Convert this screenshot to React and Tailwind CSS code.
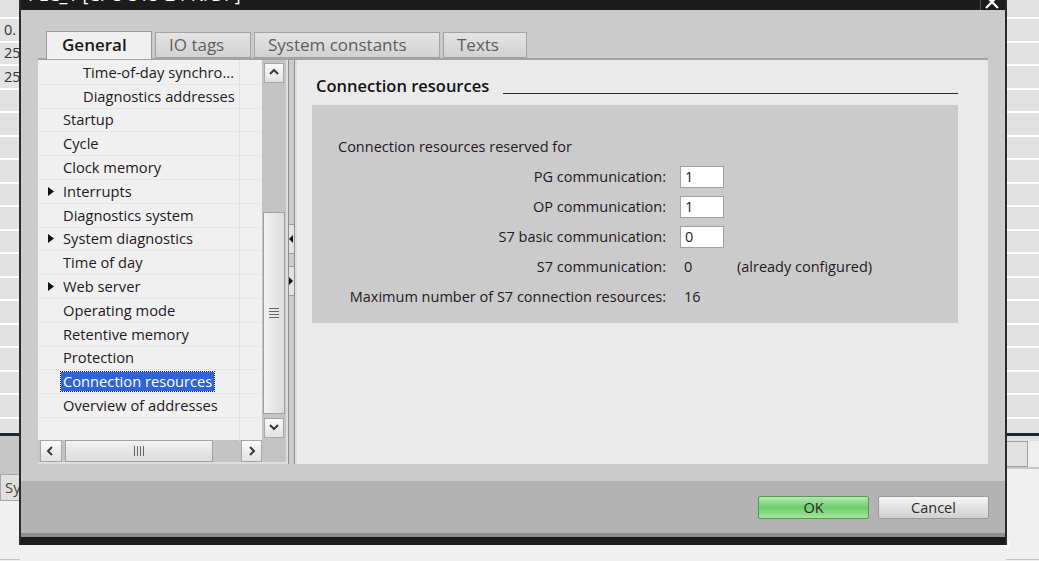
import React from 'react';

const treeItems = [
  { label: 'Time-of-day synchro...', level: 2 },
  { label: 'Diagnostics addresses', level: 2 },
  { label: 'Startup', level: 1 },
  { label: 'Cycle', level: 1 },
  { label: 'Clock memory', level: 1 },
  { label: 'Interrupts', level: 1, arrow: true },
  { label: 'Diagnostics system', level: 1 },
  { label: 'System diagnostics', level: 1, arrow: true },
  { label: 'Time of day', level: 1 },
  { label: 'Web server', level: 1, arrow: true },
  { label: 'Operating mode', level: 1 },
  { label: 'Retentive memory', level: 1 },
  { label: 'Protection', level: 1 },
  { label: 'Connection resources', level: 1, selected: true },
  { label: 'Overview of addresses', level: 1 },
  { label: '', level: 1 },
];

const tabs = [
  { label: 'General', w: 'w-[106px]', active: true },
  { label: 'IO tags', w: 'w-[96px]' },
  { label: 'System constants', w: 'w-[186px]' },
  { label: 'Texts', w: 'w-[84px]' },
];

const rows = [
  { label: 'PG communication:', input: '1' },
  { label: 'OP communication:', input: '1' },
  { label: 'S7 basic communication:', input: '0' },
  { label: 'S7 communication:', value: '0', note: '(already configured)' },
  { label: 'Maximum number of S7 connection resources:', value: '16' },
];

function Chevron({ dir }) {
  const paths = {
    up: 'M2 7 L6 3 L10 7',
    down: 'M2 3 L6 7 L10 3',
    left: 'M7 2 L3 6 L7 10',
    right: 'M4 2 L8 6 L4 10',
  };
  return (
    <svg width="12" height="12" viewBox="0 0 12 12">
      <path d={paths[dir]} fill="none" stroke="#3a3a3a" strokeWidth="2" />
    </svg>
  );
}

function ScrollButton({ dir, className = '' }) {
  return (
    <div className={`flex items-center justify-center border border-[#a6a6a6] bg-gradient-to-b from-[#fafafa] to-[#e2e2e2] ${className}`}>
      <Chevron dir={dir} />
    </div>
  );
}

function TreeRow({ item }) {
  return (
    <div className="flex h-[23.8px] border-b border-[#e6e6e6]">
      <div className="relative flex flex-1 items-center border-r border-[#e0e0e0]">
        {item.arrow ? (
          <svg className="absolute left-[10px]" width="6" height="9" viewBox="0 0 6 9">
            <path d="M0 0 L6 4.5 L0 9 Z" fill="#111" />
          </svg>
        ) : null}
        <span
          className={`${item.level === 2 ? 'ml-[43px]' : 'ml-[23px]'} whitespace-nowrap px-[2px] leading-[19px] ${
            item.selected ? 'bg-[#2f63d6] text-white outline-1 outline-dotted outline-[#0a1a55]' : 'text-[#1f1a24]'
          }`}
        >
          {item.label}
        </span>
      </div>
      <div className="w-[22px]" />
    </div>
  );
}

function BgRows({ count, cls }) {
  return Array.from({ length: count }).map((_, i) => (
    <div key={i} className={`h-[23.5px] border-b-2 border-white ${cls}`} />
  ));
}

export default function App() {
  return (
    <div className="relative h-[561px] w-[1039px] overflow-hidden bg-[#f0f0f0] font-['Open_Sans',sans-serif] text-[14.5px]">
      {/* application behind the dialog */}
      <div className="flex h-full">
        <div className="flex w-[20px] flex-col">
          <div className="h-[19px] border-b-2 border-white bg-[#e2e2e2]" />
          {['0.', '25', '25'].map((t, i) => (
            <div key={i} className="flex h-[23.5px] items-center border-b-2 border-white bg-[#e2e2e2] pl-[4px] text-[#333]">
              {t}
            </div>
          ))}
          <BgRows count={14} cls="bg-[#e2e2e2]" />
          <div className="h-[14px] bg-[#e2e2e2]" />
          <div className="h-[3px] bg-[#1f2633]" />
          <div className="h-[38px] bg-[#c6c6c6]" />
          <div className="h-[27px] border border-[#a8a8a8] bg-[#e0e0e0] pl-[4px] text-[15px] leading-[25px] text-[#444]">Sy</div>
          <div className="flex-1 border-b border-[#c4c4c4]" />
          <div className="h-[1px]" />
        </div>
        <div className="flex-1" />
        <div className="flex w-[33px] flex-col">
          <div className="h-[19px] border-b-2 border-white bg-[#e2e2e2]" />
          <BgRows count={17} cls="bg-[#e2e2e2]" />
          <div className="h-[14px] bg-[#e2e2e2]" />
          <div className="h-[3px] bg-[#1f2633]" />
          <div className="h-[5px] bg-[#e0e0e0]" />
          <div className="flex h-[26px]">
            <div className="w-[22px] border border-[#a0a0a0] bg-[#e2e2e2]" />
            <div className="flex-1 bg-[#efefef]" />
          </div>
          <div className="h-[2px] bg-[#c8c8c8]" />
          <div className="flex-1 border-b border-[#c4c4c4]" />
          <div className="h-[1px]" />
        </div>
      </div>

      {/* dialog window */}
      <div className="absolute left-[19px] top-0 flex h-[545px] w-[988px] flex-col border-x-2 border-[#2b2b2b]">
        <div className="relative h-[10px] overflow-hidden bg-[#1c1c1c]">
          <div className="absolute left-[7px] top-[-16px] whitespace-nowrap text-[18px] leading-[20px] text-white">PLC_1 [CPU 315-2 PN/DP]</div>
          <div className="absolute right-[3px] top-0 flex h-[10px] w-[22px] items-end justify-center border-l border-[#555]">
            <svg width="14" height="10" viewBox="0 0 14 10">
              <path d="M1 -4 L13 8 M13 -4 L1 8" stroke="#fff" strokeWidth="2.2" />
            </svg>
          </div>
        </div>

        <div className="flex h-[471px] flex-col bg-[#cbcbcb] pt-[21px]">
          {/* tabs */}
          <div className="flex h-[27px] items-end gap-[3px] pl-[25px]">
            {tabs.map((t) =>
              t.active ? (
                <div key={t.label} className={`${t.w} relative z-10 -mb-[1px] flex h-[28px] items-center border border-b-0 border-[#9c9c9c] bg-[#f0f0f0] pb-[1px] pl-[15px] text-[17px] font-semibold text-[#1a1a1a]`}>
                  {t.label}
                </div>
              ) : (
                <div key={t.label} className={`${t.w} flex h-[26px] items-center border border-[#a4a4a4] bg-gradient-to-b from-[#e4e4e4] to-[#d2d2d2] pb-[1px] pl-[13px] text-[17px] text-[#5e5e5e]`}>
                  {t.label}
                </div>
              )
            )}
          </div>

          {/* tab panel */}
          <div className="mx-[17px] flex h-[406px] border-t-2 border-[#a2a2a2] bg-[#dedede]">
            {/* tree */}
            <div className="flex w-[248px] flex-col">
              <div className="flex h-[380px]">
                <div className="w-[224px] bg-[#f0f0f0] pt-[1px] text-[14.7px]">
                  {treeItems.map((item, i) => (
                    <TreeRow key={i} item={item} />
                  ))}
                </div>
                <div className="flex w-[24px] flex-col items-center bg-[#c4c4c4] pt-[3px]">
                  <ScrollButton dir="up" className="h-[20px] w-[20px]" />
                  <div className="h-[129px]" />
                  <div className="flex h-[202px] w-[22px] items-center justify-center border border-[#a2a2a2] bg-gradient-to-r from-[#f2f2f2] to-[#dcdcdc]">
                    <div className="flex flex-col gap-[2px]">
                      {[0, 1, 2, 3].map((k) => (
                        <div key={k} className="h-[1px] w-[10px] bg-[#666]" />
                      ))}
                    </div>
                  </div>
                  <div className="h-[4px]" />
                  <ScrollButton dir="down" className="h-[20px] w-[20px]" />
                </div>
              </div>
              <div className="flex h-[22px] items-center bg-[#c4c4c4] pl-[2px]">
                <ScrollButton dir="left" className="h-[22px] w-[22px]" />
                <div className="ml-[3px] flex h-[22px] w-[148px] items-center justify-center gap-[2px] border border-[#a2a2a2] bg-gradient-to-b from-[#f2f2f2] to-[#dcdcdc]">
                  {[0, 1, 2, 3].map((k) => (
                    <div key={k} className="h-[10px] w-[1px] bg-[#666]" />
                  ))}
                </div>
                <div className="w-[28px]" />
                <ScrollButton dir="right" className="h-[22px] w-[21px]" />
              </div>
            </div>

            {/* splitter */}
            <div className="flex w-[11px] pl-[2px]">
              <div className="flex w-[7px] flex-col border-x border-[#8e8e8e] bg-[#cdcdcd]">
                <div className="h-[164px]" />
                <div className="flex h-[30px] items-center border-y border-[#9a9a9a] bg-[#e2e2e2]">
                  <svg width="5" height="8" viewBox="0 0 5 8">
                    <path d="M4 0 L0 4 L4 8 Z" fill="#111" />
                  </svg>
                </div>
                <div className="h-[12px]" />
                <div className="flex h-[30px] items-center border-y border-[#9a9a9a] bg-[#e2e2e2]">
                  <svg width="5" height="8" viewBox="0 0 5 8">
                    <path d="M0 0 L4 4 L0 8 Z" fill="#111" />
                  </svg>
                </div>
              </div>
            </div>

            {/* content */}
            <div className="flex flex-1 flex-col bg-[#eaeaea] pl-[15px] pr-[30px] pt-[16px]">
              <div className="flex h-[20px] items-center pl-[4px]">
                <span className="whitespace-nowrap text-[16.5px] font-semibold text-[#141414]">Connection resources</span>
                <div className="ml-[14px] mt-[15px] h-[1.5px] flex-1 bg-[#2a2a2a]" />
              </div>
              <div className="mt-[9px] flex h-[218px] flex-col bg-[#cbcbcb] pt-[32px] text-[#1f1a24]">
                <div className="h-[20px] pl-[26px] leading-[20px]">Connection resources reserved for</div>
                <div className="mt-[5px] flex flex-col">
                  {rows.map((r) => (
                    <div key={r.label} className="flex h-[30px] items-center">
                      <div className="w-[354px] whitespace-nowrap text-right">{r.label}</div>
                      {r.input ? (
                        <div className="ml-[14px] flex h-[22px] w-[44px] items-center border border-[#a0a0a0] bg-white pl-[4px]">{r.input}</div>
                      ) : (
                        <div className="ml-[14px] w-[57px] pl-[4px]">{r.value}</div>
                      )}
                      {r.note ? <div className="whitespace-nowrap">{r.note}</div> : null}
                    </div>
                  ))}
                </div>
              </div>
            </div>
          </div>
        </div>

        {/* footer */}
        <div className="flex h-[52px] items-start justify-end gap-[9px] bg-[#b3b3b3] pr-[16px] pt-[15px]">
          <button className="h-[23px] w-[111px] rounded-[2px] border border-[#4f9e4f] bg-gradient-to-b from-[#b6e8b0] via-[#6ccd6c] to-[#a8e4a0] text-[#2a2a2a]">
            OK
          </button>
          <button className="h-[23px] w-[111px] rounded-[2px] border border-[#9a9a9a] bg-gradient-to-b from-[#f6f6f6] via-[#e2e2e2] to-[#d0d0d0] text-[#2a2a2a]">
            Cancel
          </button>
        </div>
        <div className="h-[4px] bg-[#8e8e8e]" />
        <div className="relative h-[8px] bg-[#1c1c1c]">
          <div className="absolute -right-[4px] bottom-[-2px] h-[6px] w-[6px] border-b border-r border-white" />
        </div>
      </div>
    </div>
  );
}
